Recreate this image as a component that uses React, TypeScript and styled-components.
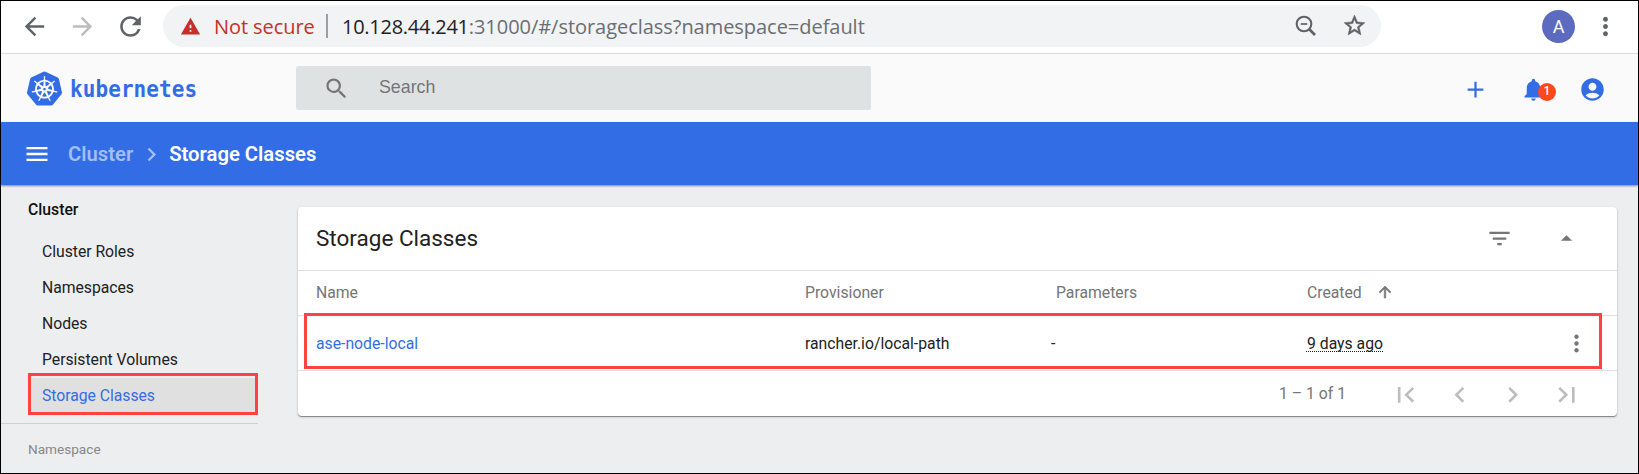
import React from "react";
import styled, { createGlobalStyle } from "styled-components";
import {
  MdArrowBack, MdArrowForward, MdRefresh, MdWarning, MdStarBorder, MdMoreVert,
  MdSearch, MdAdd, MdNotifications, MdAccountCircle, MdMenu, MdChevronRight, MdChevronLeft,
  MdFilterList, MdArrowDropUp, MdArrowUpward, MdFirstPage, MdLastPage,
} from "react-icons/md";
import { SiKubernetes } from "react-icons/si";

const Global = createGlobalStyle`
  *, *::before, *::after { box-sizing: border-box; }
  body { margin: 0; font-family: Roboto, sans-serif; background: #edeef0; }
  svg { display: block; flex: none; }
`;

const Window = styled.div`
  width: 1639px;
  height: 474px;
  border: 1px solid #000;
  background: #edeef0;
  display: flex;
  flex-direction: column;
  overflow: hidden;
  white-space: nowrap;
`;

const BrowserBar = styled.div`
  height: 53px;
  flex: none;
  display: flex;
  align-items: center;
  padding: 0 0 2px 18px;
  background: #fff;
  border-bottom: 1px solid #d9dbde;
  color: #5f6368;
`;

const Slot = styled.span<{ $w: number; $color?: string }>`
  width: ${(p) => p.$w}px;
  flex: none;
  display: flex;
  justify-content: center;
  align-items: center;
  color: ${(p) => p.$color ?? "inherit"};
`;

const Omnibox = styled.div`
  width: 1218px;
  height: 42px;
  flex: none;
  margin-left: 17px;
  border-radius: 21px;
  background: #f1f3f4;
  display: flex;
  align-items: center;
  padding: 0 13px 0 17px;
  font-family: "Open Sans", sans-serif;
  font-size: 20px;
`;

const NotSecure = styled.span`
  width: 112px;
  margin-left: 13px;
  color: #c5302b;
  letter-spacing: -0.08px;
`;

const Separator = styled.span`
  width: 2px;
  height: 24px;
  margin-right: 14px;
  background: #9b9ea2;
`;

const Url = styled.span`
  flex: 1;
  color: #6b6e72;
  letter-spacing: -0.04px;
`;

const Host = styled.span`
  color: #202124;
  letter-spacing: -0.26px;
`;

const OmniActions = styled.span`
  display: flex;
  align-items: center;
  gap: 20px;
  padding-bottom: 1px;
`;

const Star = styled(MdStarBorder)`
  path:last-child {
    stroke: currentColor;
    stroke-width: 0.5;
  }
`;

const Avatar = styled.span`
  width: 33px;
  height: 33px;
  margin-left: 161px;
  border-radius: 50%;
  background: #5c6bc0;
  color: #fff;
  display: flex;
  align-items: center;
  justify-content: center;
  font-size: 18px;
`;

const AppHeader = styled.header`
  height: 68px;
  flex: none;
  display: flex;
  align-items: center;
  padding: 0 32px 0 26px;
  background: #fafafa;
  color: #326de6;
`;

const Brand = styled.div`
  width: 269px;
  display: flex;
  align-items: center;
`;

const BrandName = styled.span`
  margin-left: 8px;
  padding-top: 1px;
  font: bold 21px/30px "DejaVu Sans Mono", monospace;
  letter-spacing: 0.08px;
  transform: scaleY(1.12);
`;

const SearchBox = styled.div`
  width: 575px;
  height: 44px;
  border-radius: 2px;
  background: #dee2e3;
  display: flex;
  align-items: center;
  padding-left: 27px;
  color: #757575;
  font: 17.8px "Liberation Sans", Arial, sans-serif;
`;

const SearchLabel = styled.span`
  margin-left: 29px;
  line-height: 20px;
  padding-bottom: 2px;
`;

const Actions = styled.div`
  margin-left: auto;
  display: flex;
  align-items: center;
  padding-top: 3px;
`;

const BellHolder = styled.span`
  position: relative;
  margin: 0 32px 0 31px;
`;

const Badge = styled.span`
  position: absolute;
  left: 18px;
  top: 7px;
  width: 18px;
  height: 18px;
  border-radius: 50%;
  background: #ff481c;
  color: #fff;
  font: 500 12px/17px Roboto, sans-serif;
  text-align: center;
`;

const Breadcrumbs = styled.nav`
  position: relative;
  height: 63px;
  flex: none;
  display: flex;
  align-items: center;
  padding: 1px 0 0 22px;
  background: #326de6;
  box-shadow: 0 1px 2px rgba(0, 0, 0, 0.45);
  color: #fff;
  font-size: 20.25px;
  font-weight: 600;
`;

const Crumb = styled.span<{ $parent?: boolean }>`
  color: ${(p) => (p.$parent ? "#a3bef4" : "#fff")};
  margin-left: ${(p) => (p.$parent ? 17 : -1)}px;
`;

const Main = styled.div`
  flex: 1;
  display: flex;
  min-height: 0;
`;

const Sidebar = styled.aside`
  width: 257px;
  flex: none;
  padding-top: 6px;
  font-size: 15.75px;
`;

const SideTitle = styled.div`
  height: 36px;
  padding-left: 27px;
  line-height: 37px;
  font-weight: 500;
  color: #111;
`;

const SideItem = styled.div`
  height: 36px;
  padding-left: 41px;
  line-height: 37px;
  letter-spacing: -0.03px;
  color: #212121;
`;

const SideList = styled.div`
  padding-top: 6px;
`;

const SelectedFrame = styled.div`
  height: 42px;
  margin: -4px 0 0 27px;
  width: 230px;
  border: 3px solid #ff4242;
  padding-top: 2px;
`;

const SelectedItem = styled.div`
  height: 34px;
  padding-left: 11px;
  line-height: 35px;
  letter-spacing: -0.03px;
  background: #e0e0e0;
  color: #326de6;
`;

const NamespaceLabel = styled.div`
  margin-top: 8px;
  border-top: 1px solid #cfd0d2;
  padding: 15px 0 0 27px;
  font-size: 13.6px;
  line-height: 20px;
  color: #87888a;
`;

const Card = styled.section`
  width: 1319px;
  height: 209px;
  margin: 22px 0 0 40px;
  border-radius: 4px;
  background: #fff;
  box-shadow: 0 1px 1px rgba(0, 0, 0, 0.4), 0 1px 3px rgba(0, 0, 0, 0.14);
  color: #757575;
  font-size: 15.75px;
`;

const CardHead = styled.div`
  height: 64px;
  display: flex;
  align-items: center;
  gap: 3px;
  padding-left: 18px;
  border-bottom: 1px solid #e0e0e0;
`;

const CardTitle = styled.h1`
  flex: 1;
  margin: 0;
  padding-bottom: 1px;
  font-size: 22.5px;
  font-weight: 400;
  color: #212121;
`;

const Row = styled.div<{ $header?: boolean }>`
  height: ${(p) => (p.$header ? 45 : 55)}px;
  display: grid;
  grid-template-columns: 489px 251px 251px 256px 1fr;
  align-items: center;
  padding: 0 0 ${(p) => (p.$header ? 2 : 0)}px 18px;
  border-bottom: 1px solid #e0e0e0;
`;

const Sorted = styled.span`
  display: flex;
  align-items: center;
  gap: 14px;

  path:last-child {
    stroke: currentColor;
    stroke-width: 0.8;
  }
`;

const Highlighted = styled.div`
  position: relative;
  color: #212121;

  &::after {
    content: "";
    position: absolute;
    left: 6px;
    top: -3px;
    width: 1298px;
    height: 56px;
    border: 3px solid #ff4242;
  }
`;

const NameLink = styled.a`
  color: #326de6;
`;

const Dash = styled.span`
  margin-left: -5px;
`;

const Age = styled.span`
  justify-self: start;
  margin-left: -1px;
  padding: 1px 0 0 1px;
  line-height: 15px;
  border-bottom: 1px dotted #212121;
`;

const MenuCell = styled.span`
  color: #757575;
`;

const Pager = styled.div`
  height: 45px;
  display: flex;
  align-items: center;
  justify-content: flex-end;
  padding-right: 35px;
  color: #bdbdbd;
`;

const Range = styled.span`
  color: #757575;
  margin-right: 44px;
  padding-bottom: 1px;
`;

const PagerButtons = styled.div`
  display: flex;
  gap: 22px;
  padding-top: 3px;
`;

const ZoomOutIcon = () => (
  <svg width="28" height="28" viewBox="0 0 28 28" fill="none" stroke="currentColor" strokeWidth="2.1">
    <circle cx="12" cy="12" r="7.3" />
    <path d="M17.3 17.3 L23 23" strokeWidth="2.7" />
    <path d="M8.7 12 H15.3" strokeWidth="1.7" />
  </svg>
);

export default function App() {
  return (
    <Window>
      <Global />
      <BrowserBar>
        <Slot $w={30}><MdArrowBack size={29} /></Slot>
        <Slot $w={66} $color="#babcbe"><MdArrowForward size={29} /></Slot>
        <Slot $w={31}><MdRefresh size={31} /></Slot>
        <Omnibox>
          <Slot $w={21} $color="#c5302b"><MdWarning size={21} /></Slot>
          <NotSecure>Not secure</NotSecure>
          <Separator />
          <Url><Host>10.128.44.241</Host>:31000/#/storageclass?namespace=default</Url>
          <OmniActions>
            <ZoomOutIcon />
            <Slot $w={28}><Star size={25} /></Slot>
          </OmniActions>
        </Omnibox>
        <Avatar>A</Avatar>
        <Slot $w={61}><MdMoreVert size={29} /></Slot>
      </BrowserBar>
      <AppHeader>
        <Brand>
          <SiKubernetes size={35} />
          <BrandName>kubernetes</BrandName>
        </Brand>
        <SearchBox>
          <MdSearch size={27} />
          <SearchLabel>Search</SearchLabel>
        </SearchBox>
        <Actions>
          <MdAdd size={27} />
          <BellHolder>
            <MdNotifications size={27} />
            <Badge>1</Badge>
          </BellHolder>
          <MdAccountCircle size={27} />
        </Actions>
      </AppHeader>
      <Breadcrumbs>
        <MdMenu size={28} />
        <Crumb $parent>Cluster</Crumb>
        <Slot $w={37} $color="#a3bef4"><MdChevronRight size={27} /></Slot>
        <Crumb>Storage Classes</Crumb>
      </Breadcrumbs>
      <Main>
        <Sidebar>
          <SideTitle>Cluster</SideTitle>
          <SideList>
            <SideItem>Cluster Roles</SideItem>
            <SideItem>Namespaces</SideItem>
            <SideItem>Nodes</SideItem>
            <SideItem>Persistent Volumes</SideItem>
            <SelectedFrame><SelectedItem>Storage Classes</SelectedItem></SelectedFrame>
          </SideList>
          <NamespaceLabel>Namespace</NamespaceLabel>
        </Sidebar>
        <Card>
          <CardHead>
            <CardTitle>Storage Classes</CardTitle>
            <MdFilterList size={27} />
            <Slot $w={101}><MdArrowDropUp size={27} /></Slot>
          </CardHead>
          <Row $header>
            <span>Name</span>
            <span>Provisioner</span>
            <span>Parameters</span>
            <Sorted>Created <MdArrowUpward size={18} /></Sorted>
          </Row>
          <Highlighted>
            <Row>
              <NameLink>ase-node-local</NameLink>
              <span>rancher.io/local-path</span>
              <Dash>-</Dash>
              <Age>9 days ago</Age>
              <MenuCell><MdMoreVert size={27} /></MenuCell>
            </Row>
          </Highlighted>
          <Pager>
            <Range>1 – 1 of 1</Range>
            <PagerButtons>
              <MdFirstPage size={31.5} />
              <MdChevronLeft size={31.5} />
              <MdChevronRight size={31.5} />
              <MdLastPage size={31.5} />
            </PagerButtons>
          </Pager>
        </Card>
      </Main>
    </Window>
  );
}
